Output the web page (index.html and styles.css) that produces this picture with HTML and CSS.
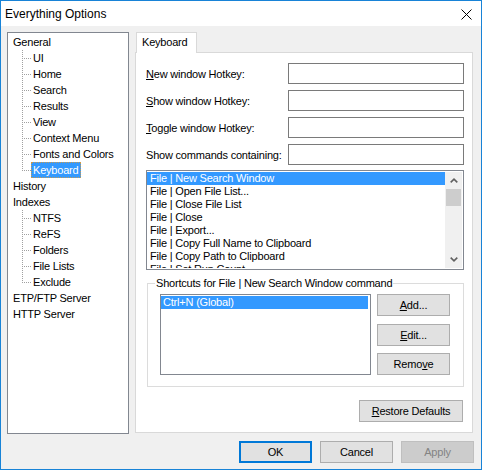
FILE: index.html
```html
<!DOCTYPE html>
<html>
<head>
<meta charset="utf-8">
<title>Everything Options</title>
<link rel="stylesheet" href="styles.css">
</head>
<body>
<div class="window">
  <div class="titlebar">
    <span class="title">Everything Options</span>
    <svg class="close" width="11" height="11" viewBox="0 0 11 11"><path d="M0.5 0.5L10.5 10.5M10.5 0.5L0.5 10.5" stroke="#000" stroke-width="1" fill="none"/></svg>
  </div>
  <div class="client">
    <div class="main">
      <ul class="tree">
        <li><span class="lbl">General</span>
          <ul class="kids">
            <li class="kid"><span class="lbl">UI</span></li>
            <li class="kid"><span class="lbl">Home</span></li>
            <li class="kid"><span class="lbl">Search</span></li>
            <li class="kid"><span class="lbl">Results</span></li>
            <li class="kid"><span class="lbl">View</span></li>
            <li class="kid"><span class="lbl">Context Menu</span></li>
            <li class="kid"><span class="lbl">Fonts and Colors</span></li>
            <li class="kid last"><span class="lbl sel">Keyboard</span></li>
          </ul>
        </li>
        <li><span class="lbl">History</span></li>
        <li><span class="lbl">Indexes</span>
          <ul class="kids">
            <li class="kid"><span class="lbl">NTFS</span></li>
            <li class="kid"><span class="lbl">ReFS</span></li>
            <li class="kid"><span class="lbl">Folders</span></li>
            <li class="kid"><span class="lbl">File Lists</span></li>
            <li class="kid last"><span class="lbl">Exclude</span></li>
          </ul>
        </li>
        <li><span class="lbl">ETP/FTP Server</span></li>
        <li><span class="lbl">HTTP Server</span></li>
      </ul>
      <div class="tabs">
        <div class="tabstrip"><div class="tab">Keyboard</div></div>
        <div class="panel">
          <div class="rows">
            <div class="row"><label><u>N</u>ew window Hotkey:</label><input class="field" type="text"></div>
            <div class="row"><label><u>S</u>how window Hotkey:</label><input class="field" type="text"></div>
            <div class="row"><label><u>T</u>oggle window Hotkey:</label><input class="field" type="text"></div>
            <div class="row"><label>Show commands containing:</label><input class="field" type="text"></div>
          </div>
          <div class="list cmds">
            <div class="items">
              <div class="item sel">File | New Search Window</div>
              <div class="item">File | Open File List...</div>
              <div class="item">File | Close File List</div>
              <div class="item">File | Close</div>
              <div class="item">File | Export...</div>
              <div class="item">File | Copy Full Name to Clipboard</div>
              <div class="item">File | Copy Path to Clipboard</div>
              <div class="item">File | Set Run Count...</div>
            </div>
            <div class="vscroll">
              <div class="sbtn"><svg width="8" height="5" viewBox="0 0 8 5"><polyline points="0.7,4.3 4,1.2 7.3,4.3" fill="none" stroke="#606060" stroke-width="1.6"/></svg></div>
              <div class="track"><div class="thumb"></div></div>
              <div class="sbtn"><svg width="8" height="5" viewBox="0 0 8 5"><polyline points="0.7,0.7 4,3.8 7.3,0.7" fill="none" stroke="#606060" stroke-width="1.6"/></svg></div>
            </div>
          </div>
          <fieldset class="group">
            <legend>Shortcuts for File | New Search Window command</legend>
            <div class="group-body">
              <div class="list keys">
                <div class="items">
                  <div class="item sel">Ctrl+N (Global)</div>
                </div>
              </div>
              <div class="side-btns">
                <button class="btn"><u>A</u>dd...</button>
                <button class="btn"><u>E</u>dit...</button>
                <button class="btn">Remo<u>v</u>e</button>
              </div>
            </div>
          </fieldset>
          <div class="restore-row"><button class="btn restore"><u>R</u>estore Defaults</button></div>
        </div>
      </div>
    </div>
    <div class="footer">
      <button class="btn default">OK</button>
      <button class="btn">Cancel</button>
      <button class="btn disabled">Apply</button>
    </div>
  </div>
</div>
</body>
</html>
```

FILE: styles.css
```css
* { box-sizing: border-box; }
html, body { margin: 0; padding: 0; background: #f0f0f0; }
body {
  font-family: "Liberation Sans", Arial, sans-serif;
  font-size: 11px;
  letter-spacing: -0.2px;
  color: #000;
}
.window {
  width: 482px;
  height: 470px;
  border: 1px solid #1883d7;
  display: flex;
  flex-direction: column;
  background: #f0f0f0;
  overflow: hidden;
}
.titlebar {
  height: 25px;
  flex: none;
  background: #fff;
  display: flex;
  align-items: center;
  padding-left: 4px;
}
.title {
  font-size: 12px;
  letter-spacing: 0;
  color: #000;
  line-height: 16px;
}
.close { margin-left: auto; margin-right: 9px; margin-top: 1px; }
.client {
  flex: 1;
  padding: 6px 8px 6px 6px;
  display: flex;
  flex-direction: column;
}
.main {
  display: flex;
  gap: 6px;
  height: 402px;
  align-items: flex-start;
}
/* tree */
.tree {
  list-style: none;
  margin: 0;
  width: 122px;
  height: 402px;
  border: 1px solid #828790;
  background: #fff;
  padding: 1px 0 0 3px;
}
.tree ul { list-style: none; margin: 0; padding: 0; }
.tree li { line-height: 16px; white-space: nowrap; }
.lbl { padding: 0 2px; display: inline-block; height: 16px; }
.lbl.sel {
  background: #3399ff;
  color: #fff;
  outline: 1px dotted #c89a50;
  outline-offset: -1px;
}
.kids { padding-left: 11px !important; }
.kid::before {
  content: "";
  display: inline-block;
  width: 9px;
  height: 16px;
  vertical-align: top;
  background:
    repeating-linear-gradient(to right, #a0a0a0 0 1px, transparent 1px 2px) 2px 8px / 7px 1px no-repeat,
    repeating-linear-gradient(to bottom, #a0a0a0 0 1px, transparent 1px 2px) 0 0 / 1px 100% no-repeat;
}
.kid.last::before {
  background:
    repeating-linear-gradient(to right, #a0a0a0 0 1px, transparent 1px 2px) 2px 8px / 7px 1px no-repeat,
    repeating-linear-gradient(to bottom, #a0a0a0 0 1px, transparent 1px 2px) 0 0 / 1px 9px no-repeat;
}
/* tabs */
.tabs { width: 338px; display: flex; flex-direction: column; }
.tabstrip { height: 20px; display: flex; }
.tab {
  margin-left: 1px;
  width: 61px;
  height: 21px;
  border: 1px solid #d9d9d9;
  border-bottom: none;
  background: #fff;
  position: relative;
  z-index: 1;
  padding-left: 5px;
  line-height: 19px;
}
.panel {
  height: 381px;
  border: 1px solid #d9d9d9;
  background: #fff;
  padding: 10px 8px 0 10px;
}
.rows { display: flex; flex-direction: column; gap: 6px; margin-bottom: 5px; }
.row { display: flex; align-items: center; height: 21px; }
.field {
  margin: 0 0 0 auto;
  width: 176px;
  height: 21px;
  border: 1px solid #7a7a7a;
  padding: 0;
  background: #fff;
  outline: none;
}
/* lists */
.list {
  border: 1px solid #828790;
  background: #fff;
  display: flex;
  padding: 1px 1px 1px 0;
  overflow: hidden;
}
.items { flex: 1; overflow: hidden; }
.item { height: 13px; line-height: 13px; padding-left: 3px; white-space: nowrap; }
.item.sel { background: #3399ff; color: #fff; }
.cmds { height: 100px; }
.vscroll {
  width: 17px;
  background: #f0f0f0;
  display: flex;
  flex-direction: column;
}
.sbtn { height: 17px; display: flex; align-items: center; justify-content: center; }
.track { flex: 1; }
.thumb { height: 17px; margin: 0 1px 0 1px; background: #cdcdcd; }
/* group */
.group {
  margin: 7px 0 0 1px;
  width: 317px;
  border: 1px solid #dcdcdc;
  padding: 4px 13px 11px 12px;
  min-inline-size: 0;
}
.group legend {
  padding: 0 1px;
  margin-left: -5px;
  line-height: 13px;
}
.group-body { display: flex; gap: 6px; height: 81px; }
.keys { width: 211px; height: 81px; padding-right: 2px; }
.keys .item { padding-left: 2px; }
.side-btns {
  width: 73px;
  display: flex;
  flex-direction: column;
  justify-content: space-between;
}
/* buttons */
.btn {
  font-family: inherit;
  font-size: 11px;
  letter-spacing: -0.2px;
  color: #000;
  width: 73px;
  height: 22px;
  background: #e1e1e1;
  border: 1px solid #adadad;
  padding: 0;
  margin: 0;
}
.btn.default { border: 2px solid #0078d7; }
.btn.disabled { background: #cccccc; border-color: #bfbfbf; color: #838383; }
.restore-row { display: flex; justify-content: flex-end; margin-top: 13px; margin-right: 1px; }
.btn.restore { width: 104px; }
.footer {
  display: flex;
  justify-content: flex-end;
  gap: 8px;
  margin-top: 7px;
  margin-right: -1px;
}
```
